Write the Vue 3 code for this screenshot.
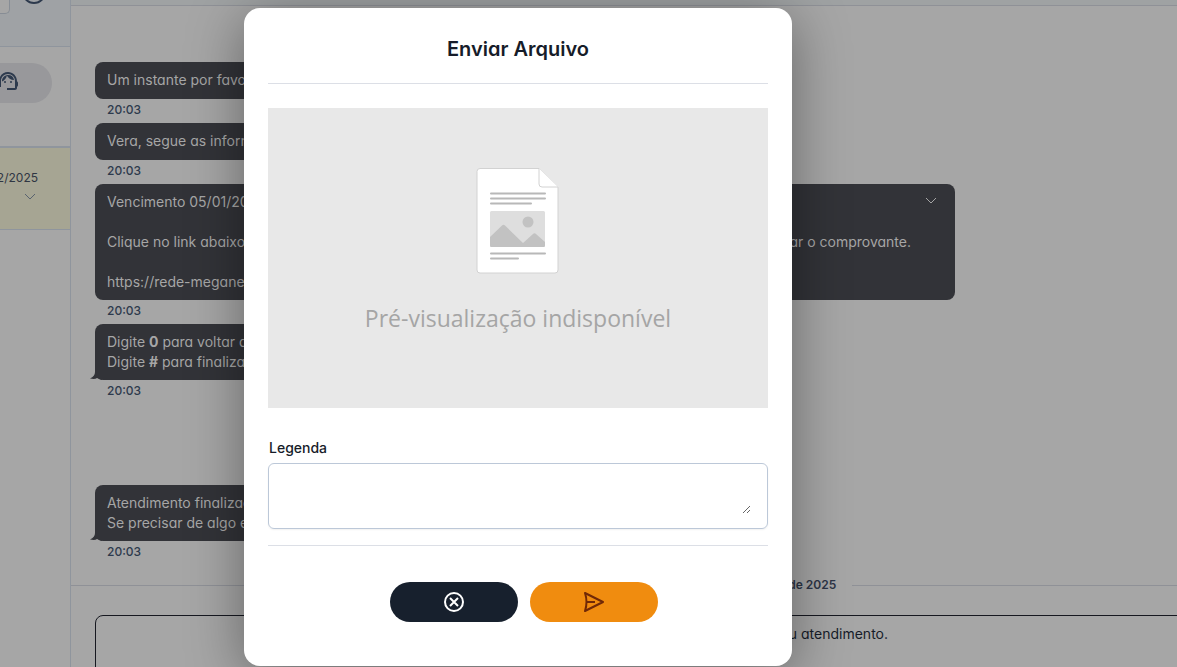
<script setup>
import { ref } from 'vue'

const caption = ref('')
</script>

<template>
  <div class="page">
    <aside class="side">
      <div class="side-head">
        <div class="search-end"></div>
        <svg class="ring" width="28" height="28" viewBox="0 0 28 28" aria-hidden="true">
          <circle cx="14" cy="14" r="11" />
        </svg>
      </div>
      <div class="side-tabs">
        <button class="agent" type="button" aria-label="Atendente">
          <svg width="24" height="24" viewBox="0 0 24 24" aria-hidden="true">
            <path d="M21 12.22C21 6.73 16.74 3 12 3c-4.69 0-9 3.65-9 9.28-.6.34-1 .98-1 1.72v2c0 1.1.9 2 2 2h1v-6.1c0-3.87 3.13-7 7-7s7 3.13 7 7V19h-8v2h8c1.1 0 2-.9 2-2v-1.22c.59-.31 1-.92 1-1.64v-2.3c0-.7-.41-1.31-1-1.62z" />
            <circle cx="9" cy="13" r="1" />
            <circle cx="15" cy="13" r="1" />
            <path d="M18 11.03A6.04 6.04 0 0 0 12.05 6c-3.03 0-6.29 2.51-6.03 6.45a8.075 8.075 0 0 0 4.86-5.89c1.31 2.63 4 4.44 7.12 4.47z" />
          </svg>
        </button>
      </div>
      <div class="ticket">
        <span class="date">2/2025</span>
        <svg class="chevron" width="12" height="8" viewBox="0 0 12 8" aria-hidden="true"><path d="M1 1l5 5 5-5" /></svg>
      </div>
    </aside>

    <main class="chat">
      <header class="chat-head"></header>
      <div class="messages">
        <div class="bubble single">Um instante por favor</div>
        <time>20:03</time>
        <div class="bubble single">Vera, segue as informações</div>
        <time>20:03</time>
        <div class="bubble wide">
          <p>Vencimento 05/01/2025</p>
          <p class="split"><span>Clique no link abaixo</span><span>enviar o comprovante.</span></p>
          <p>https://rede-meganet</p>
          <svg class="chevron open" width="12" height="8" viewBox="0 0 12 8" aria-hidden="true"><path d="M1 1l5 5 5-5" /></svg>
        </div>
        <time>20:03</time>
        <div class="bubble">
          Digite <b>0</b> para voltar ao menu<br />Digite <b>#</b> para finalizar
          <svg class="tail" width="12" height="8" viewBox="0 0 12 8" aria-hidden="true"><path d="M5 0Q5 4 0 6.500Q5 7.500 7 6L12 8V0z" /></svg>
        </div>
        <time>20:03</time>
        <div class="bubble later">
          Atendimento finalizado<br />Se precisar de algo estamos aqui
          <svg class="tail" width="12" height="8" viewBox="0 0 12 8" aria-hidden="true"><path d="M5 0Q5 4 0 6.500Q5 7.500 7 6L12 8V0z" /></svg>
        </div>
        <time>20:03</time>
      </div>
      <div class="day"><span>dezembro de 2025</span></div>
      <div class="notice"><span>seu atendimento.</span></div>
    </main>

    <div class="backdrop">
      <section class="modal" role="dialog" aria-labelledby="title">
        <h2 id="title">Enviar Arquivo</h2>
        <figure class="preview">
          <svg width="84" height="108" viewBox="0 0 84 108" aria-hidden="true">
            <path class="sheet" d="M4 1.500H63L82 20.500V103a3 3 0 0 1-3 3H4a3 3 0 0 1-3-3V4.500a3 3 0 0 1 3-3z" />
            <path class="sheet" d="M63 1.500V17a3 3 0 0 0 3 3h16" />
            <path class="rule" d="M15 26.500h54M15 31.500h54M15 36.500h40M15 86.500h54M15 91.500h27" />
            <rect x="14" y="44" width="55" height="36" rx="1.500" fill="#dedede" />
            <circle cx="52" cy="55" r="5.500" fill="#c2c2c2" />
            <path d="M14 70L26 58.500Q27.500 57 29 58.500L47 76L57 67Q58.500 65.500 60 67L69 75V78.500a1.500 1.500 0 0 1-1.500 1.500h-52a1.500 1.500 0 0 1-1.500-1.500z" fill="#c2c2c2" />
          </svg>
          <figcaption>Pré-visualização indisponível</figcaption>
        </figure>
        <label for="caption">Legenda</label>
        <div class="field"><textarea id="caption" v-model="caption"></textarea></div>
        <div class="actions">
          <button class="cancel" type="button" aria-label="Cancelar">
            <svg width="24" height="24" viewBox="0 0 24 24" aria-hidden="true">
              <circle cx="12" cy="12" r="9" /><path d="M8 8l8 8M16 8l-8 8" />
            </svg>
          </button>
          <button class="send" type="button" aria-label="Enviar">
            <svg width="24" height="24" viewBox="0 0 24 24" aria-hidden="true">
              <path d="M3 3L21 12L3 21Q6 12 3 3zM5 12h8" />
            </svg>
          </button>
        </div>
      </section>
    </div>
  </div>
</template>

<style>
body { margin: 0; }
</style>

<style scoped>
* { box-sizing: border-box; }
.page {
  position: relative;
  display: flex;
  height: 100vh;
  overflow: hidden;
  background: #a6a6a6;
  color: #161c29;
  font: 14px/20px Inter, "Liberation Sans", sans-serif;
  font-feature-settings: "cv11";
}
.side { flex: none; width: 71px; border-right: 1px solid #8f959d; }
.side-head {
  display: flex;
  align-items: flex-start;
  gap: 10px;
  height: 47px;
  overflow: hidden;
  background: #9fa2a5;
  border-bottom: 1px solid #8f959d;
}
.search-end {
  width: 10px;
  height: 14px;
  background: #a6a6a6;
  border: solid #878d95;
  border-width: 0 1px 1px 0;
  border-radius: 0 0 5px 0;
}
.ring { flex: none; margin-top: -22px; fill: none; stroke: #2d3a4d; stroke-width: 2; }
.side-tabs { height: 101px; padding-top: 16px; border-bottom: 2px solid #8f959d; }
.agent {
  display: flex;
  justify-content: flex-end;
  width: 52px;
  height: 40px;
  padding: 6px 32px 0 0;
  border: 0;
  border-radius: 0 20px 20px 0;
  background: #98989b;
}
.agent svg { flex: none; fill: #2d3a4d; }
.ticket {
  display: flex;
  flex-direction: column;
  align-items: flex-end;
  height: 82px;
  padding: 20px 32px 0 0;
  background: #a6a593;
  border-bottom: 1px solid #8f959d;
}
.date { color: #2f3643; font-size: 12px; }
.chevron { margin: 5px 2px 0 0; fill: none; stroke: #59636f; stroke-width: 1; }
.chat { flex: 1; min-width: 0; display: flex; flex-direction: column; }
.chat-head { flex: none; height: 6px; background: #9fa2a3; border-bottom: 1px solid #8f9197; }
.messages { display: flex; flex-direction: column; align-items: flex-start; padding: 56px 24px 0; }
.bubble {
  position: relative;
  min-width: 220px;
  padding: 8px 12px;
  border-radius: 8px;
  background: #323338;
  color: #a6a6a6;
}
.single { height: 37px; }
.wide { display: grid; gap: 20px; width: 100%; max-width: 860px; }
.wide p { margin: 0; }
.split { display: flex; justify-content: space-between; padding-right: 32px; }
.open { position: absolute; top: 8px; right: 16px; stroke: #a6a6a6; }
.tail { position: absolute; left: -5px; bottom: 0; fill: #323338; }
.later { margin-top: 81px; }
time { height: 24px; padding: 1px 12px; color: #2d3a4d; font-size: 12px; font-weight: 500; }
.day { display: flex; align-items: center; gap: 16px; margin-top: 10px; color: #2d3547; font-size: 12px; font-weight: 600; }
.day::before, .day::after { content: ""; height: 1px; background: #8f9197; }
.day::before { flex: 0 1 640px; }
.day::after { flex: 1; }
.notice {
  flex: 1;
  display: flex;
  margin: 20px -24px -24px 24px;
  padding: 8px 12px;
  border: 1px solid #161820;
  border-radius: 8px;
}
.notice span { flex: 0 0 780px; text-align: right; }
.backdrop { position: absolute; inset: 0; padding: 8px 24px 0 244px; }
.modal {
  display: flex;
  flex-direction: column;
  max-width: 548px;
  padding: 24px 24px 44px;
  border-radius: 16px;
  background: #fff;
  box-shadow: 0 10px 56px rgba(0, 0, 0, .4);
}
h2 {
  margin: 0 0 24px;
  padding: 3px 0 19px;
  border-bottom: 1px solid #dcdfe6;
  font-size: 20px;
  line-height: 29px;
  font-weight: 600;
  text-align: center;
}
.preview {
  display: flex;
  flex-direction: column;
  align-items: center;
  gap: 27px;
  height: 300px;
  margin: 0 0 30px;
  padding-top: 59px;
  background: #e8e8e8;
  color: #a5a5a5;
}
.preview svg { flex: none; }
.sheet { fill: #fff; stroke: #d2d2d2; }
.rule { fill: none; stroke: #b8b8b8; stroke-width: 2; stroke-linecap: round; }
figcaption { font: 23px/32px "Open Sans", "Noto Sans", sans-serif; }
label { padding-left: 1px; font-weight: 500; font-feature-settings: normal; }
.field {
  display: flex;
  height: 66px;
  margin: 5px 0 16px;
  padding: 12px 16px 14px 12px;
  border: 1px solid #bcc8d8;
  border-radius: 6px;
  box-shadow: 0 1px 2px rgba(0, 0, 0, .06);
}
textarea { flex: 1; padding: 0; border: 0; outline: 0; background: transparent; color: inherit; font: inherit; }
.actions { display: flex; justify-content: center; gap: 12px; padding: 36px 0 0 12px; border-top: 1px solid #dcdfe6; }
.actions button {
  display: grid;
  place-items: center;
  width: 128px;
  height: 40px;
  padding: 0;
  border: 0;
  border-radius: 20px;
}
.actions svg { fill: none; stroke-width: 2; stroke-linejoin: round; }
.cancel { background: #17202d; }
.cancel svg { stroke: #fff; }
.send { background: #f08c0f; }
.send svg { stroke: #702907; }
</style>
